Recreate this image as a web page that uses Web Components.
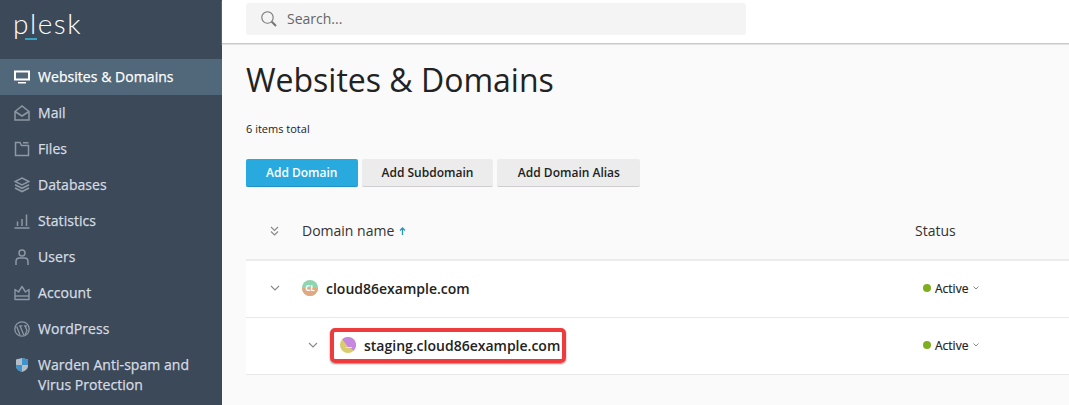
<!DOCTYPE html>
<html lang="en">
  <head>
    <meta charset="UTF-8" />
    <title>Websites &amp; Domains</title>
    <style>
      html, body { margin: 0; height: 100%; overflow: hidden; }
      body { font-family: 'Open Sans', sans-serif; }
      plesk-app { height: 405px; }
    </style>
    <script>
      const ICONS = {
        monitor: '<path d="M1 2.500h14v8H1z" fill="none" stroke="currentColor" stroke-width="2"/><path d="M4 13h8v1.500H4z" fill="currentColor"/>',
        mail: '<path d="M1 6.500 8 1l7 5.500V15H1z" fill="none" stroke="currentColor" stroke-width="1.500"/><path d="M1 6.500l7 4.500 7-4.500" fill="none" stroke="currentColor" stroke-width="1.500"/>',
        files: '<path d="M1.500 1.500v13h13V4.500H7.500L6 1.500zM9 1.700h5.500" fill="none" stroke="currentColor" stroke-width="1.500"/>',
        db: '<path d="M8 1 15 4.500 8 8 1 4.500z" fill="none" stroke="currentColor" stroke-width="1.400"/><path d="M1 7.800 8 11.300l7-3.500M1 11 8 14.500 15 11" fill="none" stroke="currentColor" stroke-width="1.600"/>',
        stats: '<path d="M.5 15h15" stroke="currentColor" stroke-width="1.500"/><path d="M3.500 8.500V13M8 6v7M12.500 1.500V13" stroke="currentColor" stroke-width="1.500"/>',
        user: '<circle cx="8" cy="4" r="3" fill="none" stroke="currentColor" stroke-width="1.500"/><path d="M2 16v-3.500C2 10.500 3.500 9 5.500 9h5c2 0 3.500 1.500 3.500 3.500V16" fill="none" stroke="currentColor" stroke-width="1.500"/>',
        crown: '<path d="M1 4.500 4.500 7 8 1.500 11.500 7 15 4.500v10H1z" fill="none" stroke="currentColor" stroke-width="1.400" stroke-linejoin="round"/><path d="M1 11h14" stroke="currentColor" stroke-width="1.400"/>',
        wp: '<circle cx="8" cy="8" r="7.200" fill="none" stroke="currentColor" stroke-width="1.300"/><path d="M2.700 5.500 6 14M5.200 4.800h3.200M6 5l3.800 9M10 4.800h3M11 4.800 13 9.500 11 14" fill="none" stroke="currentColor" stroke-width="1.300"/>',
        shield: '<path d="M2 2.500 8 1l6 1.500v6.500c0 3-3 5-6 6-3-1-6-3-6-6z" fill="#b4bec8"/><path d="M8 1l6 1.500V8H8zM2 8h6v7c-3-1-6-3-6-6z" fill="#3f93cc"/>'
      }

      class NavItem extends HTMLElement {
        connectedCallback() {
          const icon = ICONS[this.getAttribute('icon')]
          const root = this.attachShadow({ mode: 'open' })
          root.innerHTML = `
            <style>
              :host { display: flex; gap: 8px; padding: 8px 14px; color: #d6dce2; font-size: 14px; line-height: 20px; letter-spacing: .05px; -webkit-text-stroke: .25px; }
              :host([active]) { background: #51677a; color: #fff; }
              svg { flex: none; width: 16px; height: 16px; margin-top: 2px; color: #8d98a3; }
              :host([active]) svg { color: #fff; }
            </style>
            <svg viewBox="0 0 16 16">${icon}</svg><span><slot></slot></span>`
        }
      }

      class SideBar extends HTMLElement {
        connectedCallback() {
          const root = this.attachShadow({ mode: 'open' })
          root.innerHTML = `
            <style>
              :host { display: block; flex: none; width: 222px; background: #3c4959; box-sizing: border-box; }
              .logo { height: 59px; box-sizing: border-box; padding: 9px 0 0 13px; color: #fff; font: 300 28px/29px Lato, sans-serif; letter-spacing: 1.500px; }
              .logo i { display: block; width: 12px; height: 2px; margin: 0 0 0 12px; background: #3ba3c2; }
            </style>
            <div class="logo">plesk<i></i></div>
            <slot></slot>`
        }
      }

      class SearchBar extends HTMLElement {
        connectedCallback() {
          const root = this.attachShadow({ mode: 'open' })
          root.innerHTML = `
            <style>
              :host { display: block; height: 44px; box-sizing: border-box; padding: 3px 0 0 24px; background: #fff; border-bottom: 1px solid #c9c9c9; box-shadow: 0 1px 1px #e4e4e4; }
              .box { display: flex; align-items: center; gap: 10px; width: 500px; height: 32px; box-sizing: border-box; padding: 0 0 1px 15px; background: #f4f4f4; border-radius: 3px; color: #666; font-size: 14px; }
              svg { width: 16px; height: 16px; }
            </style>
            <div class="box">
              <svg viewBox="0 0 16 16" fill="none" stroke="#777"><circle cx="6.500" cy="6.500" r="5.700" stroke-width="1.100"/><path d="M10.800 10.800 15 15" stroke-width="2"/></svg>
              <span>Search...</span>
            </div>`
        }
      }

      class ActionButton extends HTMLElement {
        connectedCallback() {
          const root = this.attachShadow({ mode: 'open' })
          root.innerHTML = `
            <style>
              :host { display: block; height: 28px; box-sizing: border-box; padding: 0 20px; background: #ececec; border-bottom: 1px solid #cfcfcf; border-radius: 2px; color: #222; font-size: 12px; font-weight: 600; line-height: 27px; }
              :host([primary]) { background: #28aade; border-bottom-color: #1f93c3; color: #fff; }
            </style><slot></slot>`
        }
      }

      class DomainRow extends HTMLElement {
        connectedCallback() {
          const child = this.hasAttribute('child')
          const avatar = child
            ? '<svg class="av" viewBox="0 0 16 16"><circle cx="8" cy="8" r="8" fill="#d9cb70"/><path d="M2.300 2.300A8 8 0 0 1 13.700 13.700L11 11.500 8 10z" fill="#c587e2"/><path d="M5.500 10.500H12" stroke="#eee6b8" stroke-width="1"/></svg>'
            : '<svg class="av" viewBox="0 0 16 16"><circle cx="8" cy="8" r="8" fill="#8fd4b0"/><path d="M0 8a8 8 0 0 0 16 0z" fill="#e0a981"/><text x="8" y="10.800" text-anchor="middle" font-family="Open Sans" font-size="8" font-weight="700" fill="#fff">CL</text></svg>'
          const name = `${avatar}<span><slot></slot></span>`
          const root = this.attachShadow({ mode: 'open' })
          root.innerHTML = `
            <style>
              :host { display: grid; grid-template-columns: 669px 1fr; align-items: center; height: 57px; box-sizing: border-box; background: #fff; border-bottom: 1px solid #e8e8e8; color: #222; font-size: 14px; font-weight: 600; }
              .name { display: flex; align-items: center; padding: 0 0 2px ${child ? 62 : 24}px; }
              .chev { flex: none; width: 10px; height: 6px; margin-right: ${child ? 12 : 22}px; }
              .av { flex: none; width: 16px; height: 16px; margin-right: 8px; }
              .mark { display: flex; align-items: center; height: 35px; box-sizing: border-box; padding: 0 2px 0 6px; border: 4px solid #ee3b3e; border-radius: 5px; box-shadow: 0 1px 2px #888; }
              .status { display: flex; align-items: center; padding: 0 0 2px 8px; font-size: 12px; font-weight: 400; color: #222; -webkit-text-stroke: .2px; }
              .dot { width: 8px; height: 8px; margin-right: 4px; border-radius: 50%; background: #7fae1f; }
              .down { width: 6px; height: 4px; margin-left: 5px; }
            </style>
            <div class="name">
              <svg class="chev" viewBox="0 0 10 6" fill="none" stroke="#888" stroke-width="1.100"><path d="M1 1 5 5 9 1"/></svg>
              ${child ? `<div class="mark">${name}</div>` : name}
            </div>
            <div class="status"><i class="dot"></i>Active
              <svg class="down" viewBox="0 0 6 4" fill="none" stroke="#888"><path d="M.5.5 3 3 5.500.5"/></svg>
            </div>`
        }
      }

      class DomainList extends HTMLElement {
        connectedCallback() {
          const root = this.attachShadow({ mode: 'open' })
          root.innerHTML = `
            <style>
              :host { display: block; margin-top: 25px; }
              .head { display: grid; grid-template-columns: 669px 1fr; align-items: center; height: 49px; box-sizing: border-box; padding-bottom: 10px; border-bottom: 2px solid #ececec; font-size: 14px; color: #333; }
              .col { display: flex; align-items: center; padding-left: 24px; }
              .col svg { flex: none; }
              .sort { margin-left: 5px; }
              .status { padding-left: 0; }
            </style>
            <div class="head">
              <div class="col">
                <svg style="margin-right:23px" width="9" height="10" viewBox="0 0 9 10" fill="none" stroke="#888" stroke-width="1.100"><path d="M1 1 4.500 4.500 8 1M1 5.500 4.500 9 8 5.500"/></svg>
                Domain name
                <svg class="sort" width="7" height="8" viewBox="0 0 7 8" fill="none" stroke="#2a93b8" stroke-width="1.300"><path d="M3.500 8V1M1 3.500 3.500 1 6 3.500"/></svg>
              </div>
              <div class="col status">Status</div>
            </div>
            <slot></slot>`
        }
      }

      class ContentPane extends HTMLElement {
        connectedCallback() {
          const root = this.attachShadow({ mode: 'open' })
          root.innerHTML = `
            <style>
              :host { display: block; flex: 1; min-width: 0; background: #fafafa; }
              .body { padding-left: 24px; }
              h1 { margin: 0; padding-top: 14px; color: #222; font-size: 32px; font-weight: 400; line-height: 44px; }
              .count { margin-top: 19px; color: #222; font-size: 11px; line-height: 16px; }
              .tools { display: flex; gap: 4px; margin-top: 22px; }
            </style>
            <search-bar></search-bar>
            <div class="body">
              <h1>Websites &amp; Domains</h1>
              <div class="count">6 items total</div>
              <div class="tools">
                <action-button primary>Add Domain</action-button>
                <action-button>Add Subdomain</action-button>
                <action-button style="padding: 0 20.500px">Add Domain Alias</action-button>
              </div>
              <domain-list>
                <domain-row>cloud86example.com</domain-row>
                <domain-row child>staging.cloud86example.com</domain-row>
              </domain-list>
            </div>`
        }
      }

      class PleskApp extends HTMLElement {
        connectedCallback() {
          const root = this.attachShadow({ mode: 'open' })
          root.innerHTML = `
            <style>:host { display: flex; overflow: hidden; }</style>
            <side-bar>
              <nav-item icon="monitor" active>Websites &amp; Domains</nav-item>
              <nav-item icon="mail">Mail</nav-item>
              <nav-item icon="files">Files</nav-item>
              <nav-item icon="db">Databases</nav-item>
              <nav-item icon="stats">Statistics</nav-item>
              <nav-item icon="user">Users</nav-item>
              <nav-item icon="crown">Account</nav-item>
              <nav-item icon="wp">WordPress</nav-item>
              <nav-item icon="shield">Warden Anti-spam and Virus Protection</nav-item>
            </side-bar>
            <content-pane></content-pane>`
        }
      }

      customElements.define('nav-item', NavItem)
      customElements.define('side-bar', SideBar)
      customElements.define('search-bar', SearchBar)
      customElements.define('action-button', ActionButton)
      customElements.define('domain-row', DomainRow)
      customElements.define('domain-list', DomainList)
      customElements.define('content-pane', ContentPane)
      customElements.define('plesk-app', PleskApp)
    </script>
  </head>
  <body>
    <plesk-app></plesk-app>
  </body>
</html>
